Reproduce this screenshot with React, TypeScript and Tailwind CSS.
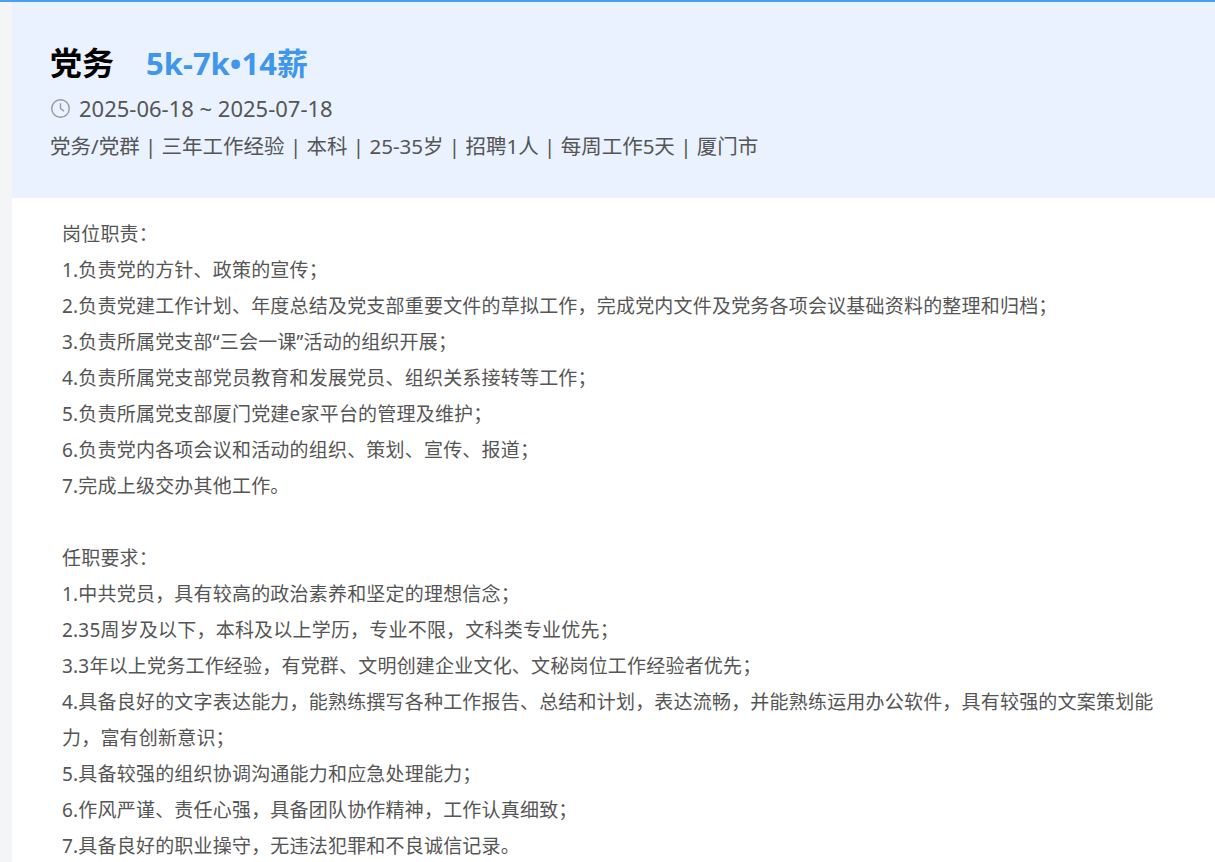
import React from 'react'

const duties = [
  '岗位职责：',
  '1.负责党的方针、政策的宣传；',
  '2.负责党建工作计划、年度总结及党支部重要文件的草拟工作，完成党内文件及党务各项会议基础资料的整理和归档；',
  '3.负责所属党支部“三会一课”活动的组织开展；',
  '4.负责所属党支部党员教育和发展党员、组织关系接转等工作；',
  '5.负责所属党支部厦门党建e家平台的管理及维护；',
  '6.负责党内各项会议和活动的组织、策划、宣传、报道；',
  '7.完成上级交办其他工作。',
]

const reqs = [
  '任职要求：',
  '1.中共党员，具有较高的政治素养和坚定的理想信念；',
  '2.35周岁及以下，本科及以上学历，专业不限，文科类专业优先；',
  '3.3年以上党务工作经验，有党群、文明创建企业文化、文秘岗位工作经验者优先；',
  '4.具备良好的文字表达能力，能熟练撰写各种工作报告、总结和计划，表达流畅，并能熟练运用办公软件，具有较强的文案策划能力，富有创新意识；',
  '5.具备较强的组织协调沟通能力和应急处理能力；',
  '6.作风严谨、责任心强，具备团队协作精神，工作认真细致；',
  '7.具备良好的职业操守，无违法犯罪和不良诚信记录。',
]

export default function App() {
  return (
    <div
      className="h-[862px] overflow-hidden border-t-2 border-[#4a9ff0] bg-[#f4f5f7] pl-[12px]"
      style={{ fontFamily: '"Noto Sans", "Noto Sans CJK SC", sans-serif' }}
    >
      <div className="h-full bg-white">
        <div className="h-[196px] bg-[#e9f2fe] px-[38px] pt-[37px]">
          <div className="flex items-baseline gap-[32px] leading-[48px]">
            <span className="text-[32px] font-bold text-black">党务</span>
            <span className="text-[31px] font-bold text-[#3f96ea]">5k-7k•14薪</span>
          </div>
          <div className="mt-[4px] flex items-center gap-[8px] text-[22px] leading-[34px] text-[#555]">
            <svg width="21" height="21" viewBox="0 0 24 24" fill="none" stroke="#999" strokeWidth="1.6">
              <circle cx="12" cy="12" r="10" />
              <polyline points="12 6 12 12 16 15" />
            </svg>
            <span>2025-06-18 ~ 2025-07-18</span>
          </div>
          <div className="mt-[4px] text-[20.5px] leading-[34px] text-[#555]">
            党务/党群 | 三年工作经验 | 本科 | 25-35岁 | 招聘1人 | 每周工作5天 | 厦门市
          </div>
        </div>
        <div className="px-[50px] pt-[18px] text-[19px] leading-[36px] tracking-[0.2px] text-[#555]">
          {duties.map((t) => (
            <div key={t}>{t}</div>
          ))}
          <div className="h-[36px]" />
          {reqs.map((t) => (
            <div key={t}>{t}</div>
          ))}
        </div>
      </div>
    </div>
  )
}
